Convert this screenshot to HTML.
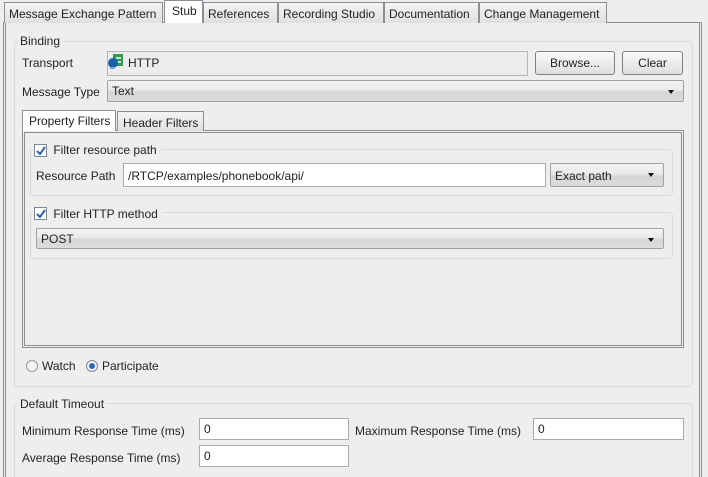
<!DOCTYPE html>
<html style="width:708px;height:477px;overflow:hidden"><head><style>
*{box-sizing:border-box;margin:0;padding:0}
body{width:708px;height:477px;background:#eeeeee;font-family:"Liberation Sans",sans-serif;font-size:12px;color:#222;position:relative;overflow:hidden}
.a{position:absolute}
.tab{position:absolute;top:2px;height:21px;border:1px solid #8a8f96;border-bottom:none;background:linear-gradient(#f4f4f4,#e0e0e0);padding:4px 0 0 4px;white-space:nowrap}
.sel{background:#fff;top:0;height:23px;padding-top:3px}
.grp{position:absolute;border:1px solid #d4dbe3;border-radius:4px}
.gt{position:absolute;background:#eeeeee;padding:0 2px}
.fld{position:absolute;background:#fff;border:1px solid #a7abb0;padding:3px 0 0 4px;white-space:nowrap}
.btn{position:absolute;border:1px solid #7d8187;border-radius:3px;background:linear-gradient(#fafafa,#dedede);text-align:center;padding-top:4px}
.cmb{position:absolute;border:1px solid #9ea2a7;border-radius:2px;background:linear-gradient(#f4f4f4 0%,#eaeaea 45%,#d6d6d6 55%,#dcdcdc 100%);padding:3px 0 0 4px}
.cmb:after{content:"";position:absolute;right:9px;top:9px;border-left:3px solid transparent;border-right:3px solid transparent;border-top:4px solid #111}
.cb{position:absolute;width:13px;height:13px;border:1px solid #7a8a9a;background:#fff}
.cb svg{position:absolute;left:0;top:0}
</style></head><body>
<div class="a" style="left:3px;top:22px;width:699px;height:460px;border:1px solid #8a8f96;border-left:3px double #8a8f96;border-right:3px double #8a8f96"></div>
<div class="tab" style="left:4px;width:159px">Message Exchange Pattern</div>
<div class="tab sel" style="left:164px;width:39px;padding-left:7px">Stub</div>
<div class="tab" style="left:203px;width:75px">References</div>
<div class="tab" style="left:278px;width:106px">Recording Studio</div>
<div class="tab" style="left:384px;width:95px">Documentation</div>
<div class="tab" style="left:479px;width:128px">Change Management</div>

<div class="grp" style="left:14px;top:41px;width:679px;height:346px"></div>
<div class="gt" style="left:18px;top:34px">Binding</div>
<div class="a" style="left:22px;top:56px">Transport</div>
<div class="a" style="left:107px;top:51px;width:421px;height:25px;border:1px solid #b3b6ba;background:#ececec"></div>
<svg class="a" style="left:107px;top:54px" width="18" height="16"><rect x="6" y="0" width="10" height="12" fill="#2e9a52"/><rect x="9" y="3" width="5" height="2" fill="#bfe8c8"/><rect x="9" y="7" width="5" height="2" fill="#bfe8c8"/><circle cx="6" cy="9" r="5" fill="#1a5fa8"/><rect x="3" y="13" width="5" height="2" fill="#7aa7d6"/></svg>
<div class="a" style="left:128px;top:56px">HTTP</div>
<div class="btn" style="left:535px;top:51px;width:80px;height:24px">Browse...</div>
<div class="btn" style="left:622px;top:51px;width:61px;height:24px">Clear</div>
<div class="a" style="left:22px;top:85px">Message Type</div>
<div class="cmb" style="left:107px;top:80px;width:577px;height:22px">Text</div>

<div class="a" style="left:22px;top:130px;width:662px;height:218px;border:3px double #8a8f96"></div>
<div class="tab sel" style="left:22px;top:110px;height:21px;width:94px;padding:3px 0 0 6px">Property Filters</div>
<div class="tab" style="left:117px;top:111px;height:20px;width:87px;padding:4px 0 0 5px">Header Filters</div>

<div class="grp" style="left:30px;top:149px;width:643px;height:47px"></div>
<div class="gt" style="left:32px;top:143px;padding-right:4px">&nbsp;<span style="padding-left:16px">Filter resource path</span></div>
<div class="cb" style="left:34px;top:144px"><svg width="12" height="12"><path d="M2 6 L5 9 L10 2" stroke="#3060a8" stroke-width="2" fill="none"/></svg></div>
<div class="a" style="left:36px;top:169px">Resource Path</div>
<div class="fld" style="left:123px;top:163px;width:423px;height:24px;padding-top:5px">/RTCP/examples/phonebook/api/</div>
<div class="cmb" style="left:550px;top:163px;width:114px;height:24px;padding-top:5px">Exact path</div>

<div class="grp" style="left:30px;top:212px;width:643px;height:47px"></div>
<div class="gt" style="left:32px;top:207px;padding-right:4px">&nbsp;<span style="padding-left:16px">Filter HTTP method</span></div>
<div class="cb" style="left:34px;top:207px"><svg width="12" height="12"><path d="M2 6 L5 9 L10 2" stroke="#3060a8" stroke-width="2" fill="none"/></svg></div>
<div class="cmb" style="left:36px;top:228px;width:628px;height:21px">POST</div>

<svg class="a" style="left:25px;top:359px" width="80" height="14"><circle cx="7" cy="7" r="5.5" fill="#f4f4f4" stroke="#9a9a9a"/><circle cx="67" cy="7" r="5.5" fill="#f4f4f4" stroke="#7a8a9a"/><circle cx="67" cy="7" r="3" fill="#2a6ab8"/></svg>
<div class="a" style="left:42px;top:359px">Watch</div>
<div class="a" style="left:102px;top:359px">Participate</div>

<div class="grp" style="left:14px;top:403px;width:679px;height:90px"></div>
<div class="gt" style="left:18px;top:397px">Default Timeout</div>
<div class="a" style="left:22px;top:424px">Minimum Response Time (ms)</div>
<div class="fld" style="left:199px;top:418px;width:150px;height:22px">0</div>
<div class="a" style="left:355px;top:424px">Maximum Response Time (ms)</div>
<div class="fld" style="left:533px;top:418px;width:151px;height:22px">0</div>
<div class="a" style="left:22px;top:451px">Average Response Time (ms)</div>
<div class="fld" style="left:199px;top:445px;width:150px;height:22px">0</div>
</body></html>
